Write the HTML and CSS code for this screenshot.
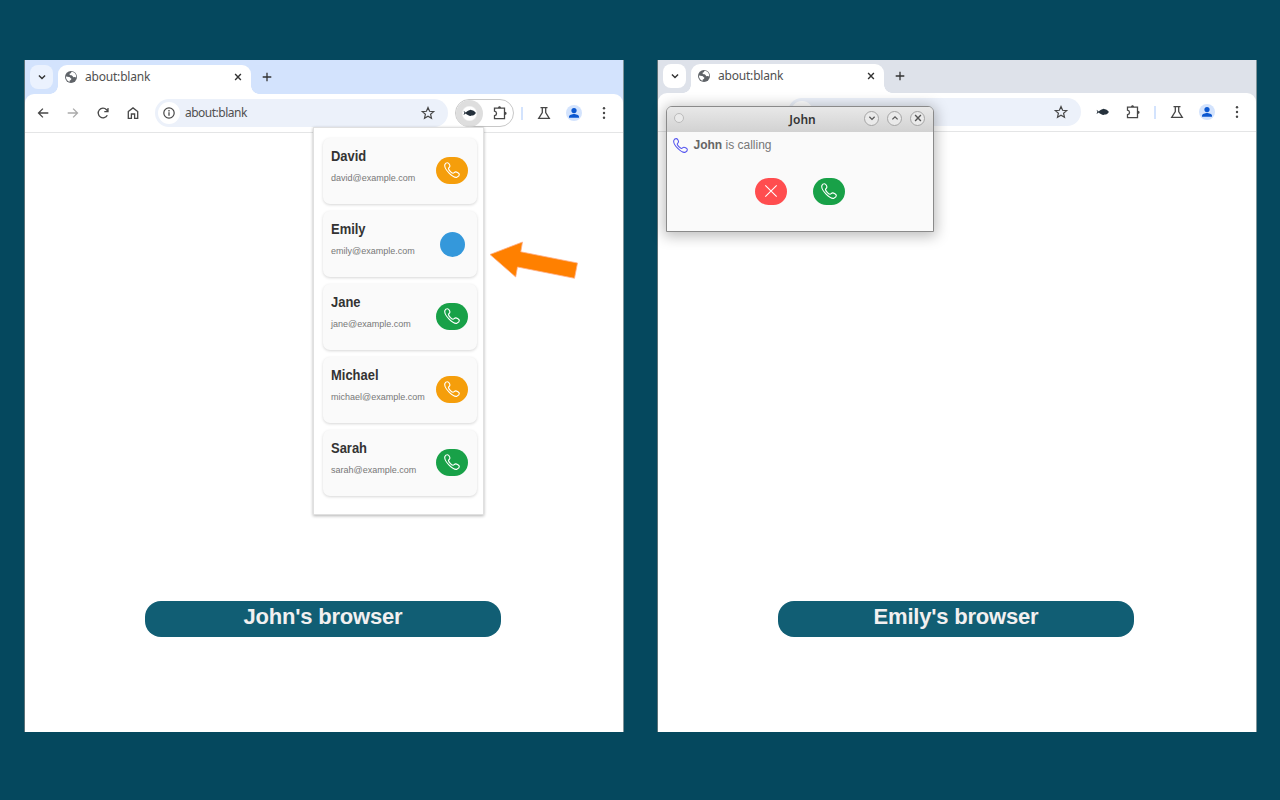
FILE: index.html
```
<!DOCTYPE html>
<html lang="en">
<head>
<meta charset="utf-8">
<title>Calling between browsers</title>
<link rel="stylesheet" href="styles.css">
</head>
<body>
<svg class="defs" width="0" height="0">
  <symbol id="phone" viewBox="0 0 16 16"><path d="M.9 2.500C1.300 1.500 2.500.7 3.500.7c1.200 0 2.400 2.200 2.400 3.400 0 1.300-1.500 1.500-1.400 2.500.2 1.400 2.900 4.300 4.400 4.600 1.100.2 1.400-1.300 2.700-1.300 1.200 0 3.700 1.300 3.700 2.500 0 1-1.200 2.200-2.200 2.700C9.500 16.600-.5 7 .9 2.500z" fill="none" stroke="currentColor" stroke-width="1.15" stroke-linejoin="round"/></symbol>
  <symbol id="down" viewBox="0 0 16 16"><path d="M4.500 6.300 8 9.800l3.500-3.500" class="line bold"/></symbol>
  <symbol id="up" viewBox="0 0 16 16"><path d="M4.500 9.800 8 6.300l3.500 3.500" class="line bold"/></symbol>
  <symbol id="cross" viewBox="0 0 16 16"><path d="m4.700 4.700 6.600 6.600m0-6.600-6.600 6.600" class="line bold"/></symbol>
  <symbol id="plus" viewBox="0 0 16 16"><path d="M8 3.700v8.600M3.700 8h8.600" class="line"/></symbol>
  <symbol id="globe" viewBox="0 0 14 14"><circle cx="7" cy="7" r="6" fill="#5f6368"/><path d="M1.900 6.500c1.300.1 2.300.7 3.300.6 1 .2 1.200 1.200 2.100 1.400.2 1-.5 1.700-1.600 2v1.300C3.600 11.400 1.900 9.400 1.900 6.500zM7.700 1.800c-.8.9-.4 1.500-1.600 1.700-.9.200-.7 1-.1 1.400 1 .4 1.800.2 2.500 1 .5.800 1 1.400 2 1.200.7-.1 1.200.1 1.600.6.600-2.800-1.200-5.500-4.400-5.900z" fill="#fff"/></symbol>
  <symbol id="back" viewBox="0 0 16 16"><path d="M13.300 8H3.500M7.900 3.600 3.500 8l4.400 4.400" class="line"/></symbol>
  <symbol id="reload" viewBox="0 0 16 16"><path d="M12.300 10.200A4.800 4.800 0 1 1 11.500 4.700L13 6.300M13 2.900v3.700H9.300" class="line"/></symbol>
  <symbol id="home" viewBox="0 0 16 16"><path d="M3.300 6.500 8 2.900l4.700 3.600v6.800H9.600V9H6.400v4.300H3.300z" class="line"/></symbol>
  <symbol id="info" viewBox="0 0 16 16"><circle cx="8" cy="8" r="5.200" class="line thin"/><path d="M8 7.300v3.400M8 5.100v1.300" class="line"/></symbol>
  <symbol id="star" viewBox="0 0 16 16"><path d="m8 2.500 1.600 3.800 4.100.3-3.100 2.700.9 4L8 11.200l-3.500 2.100.9-4-3.100-2.700 4.100-.3z" class="line thin"/></symbol>
  <symbol id="fish" viewBox="0 0 16 16"><path d="m1.500 5.700 2.300 1.700C5.200 5.900 6.700 5.100 8.700 4.700l1.200.6c1.800.3 3.100 1.200 4 2.600-1 1.700-2.400 2.500-4.200 2.700L8.500 11C6.700 10.500 5 9.700 3.800 8.400L1.500 9.900l.9-2.100z" fill="#25313c"/></symbol>
  <symbol id="puzzle" viewBox="0 0 18 18"><path d="M3.500 4.200H13.500V14.700H3.500V11.700C6.200 11.200 6.200 7.700 3.500 7.200Z" class="line"/><path d="M7 4C7 1.700 10 1.700 10 4ZM13.800 7.800C16.200 7.800 16.200 11 13.800 11Z" fill="#474747"/></symbol>
  <symbol id="flask" viewBox="0 0 16 16"><path d="M4.500 2.600h7M6.300 3v4.600L2.700 13.300h10.600L9.700 7.600V3" class="line"/></symbol>
  <symbol id="person" viewBox="0 0 16 16"><circle cx="8" cy="8" r="8" fill="#d3e3fd"/><circle cx="8" cy="5.600" r="2.600" fill="#0b57d0"/><path d="M3 12.700v-1c0-1.700 3.300-2.600 5-2.600s5 .9 5 2.600v1z" fill="#0b57d0"/></symbol>
  <symbol id="dots" viewBox="0 0 16 16"><g fill="#474747"><circle cx="8" cy="3.300" r="1.200"/><circle cx="8" cy="8" r="1.200"/><circle cx="8" cy="12.700" r="1.200"/></g></symbol>
  <symbol id="decline" viewBox="0 0 16 16"><path d="m2.300 2.300 11.400 11.400m0-11.400L2.300 13.700" fill="none" stroke="#fff" stroke-width="1.1"/></symbol>
</svg>

<main class="stage">
  <section class="browser active">
    <header class="tabs">
      <div class="tab-search"><svg class="i14"><use href="#down"/></svg></div>
      <div class="tab"><svg class="i14"><use href="#globe"/></svg><span class="tab-title">about:blank</span><svg class="i14"><use href="#cross"/></svg></div>
      <svg class="i16 new-tab"><use href="#plus"/></svg>
    </header>
    <nav class="toolbar">
      <span class="cell"><svg class="i16"><use href="#back"/></svg></span>
      <span class="cell dim"><svg class="i16 flip"><use href="#back"/></svg></span>
      <span class="cell"><svg class="i16"><use href="#reload"/></svg></span>
      <span class="cell"><svg class="i16"><use href="#home"/></svg></span>
      <div class="omnibox"><span class="site"><svg class="i16"><use href="#info"/></svg></span><span class="url">about:blank</span><svg class="i16"><use href="#star"/></svg></div>
      <div class="extensions"><span class="ext"><svg class="i16"><use href="#fish"/></svg></span><svg class="i18"><use href="#puzzle"/></svg></div>
      <span class="divider"></span>
      <span class="cell"><svg class="i16"><use href="#flask"/></svg></span>
      <span class="cell"><svg class="i16"><use href="#person"/></svg></span>
      <span class="cell"><svg class="i16"><use href="#dots"/></svg></span>
    </nav>
    <div class="page"><h2 class="label">John's browser</h2></div>

    <aside class="popup">
      <article class="contact"><div><h3>David</h3><p>david@example.com</p></div><button class="call busy"><svg class="i16"><use href="#phone"/></svg></button></article>
      <article class="contact"><div><h3>Emily</h3><p>emily@example.com</p></div><span class="calling"></span></article>
      <article class="contact"><div><h3>Jane</h3><p>jane@example.com</p></div><button class="call"><svg class="i16"><use href="#phone"/></svg></button></article>
      <article class="contact"><div><h3>Michael</h3><p>michael@example.com</p></div><button class="call busy"><svg class="i16"><use href="#phone"/></svg></button></article>
      <article class="contact"><div><h3>Sarah</h3><p>sarah@example.com</p></div><button class="call"><svg class="i16"><use href="#phone"/></svg></button></article>
    </aside>
    <svg class="arrow" viewBox="0 0 90 40"><path d="M1 14.500 33.500 2l-1.700 9.800L88.500 23 85.500 38.300 28.500 27l-1.800 10z" fill="#ff8000" stroke="#ffb08c" stroke-width=".8"/></svg>
  </section>

  <section class="browser inactive">
    <header class="tabs">
      <div class="tab-search"><svg class="i14"><use href="#down"/></svg></div>
      <div class="tab"><svg class="i14"><use href="#globe"/></svg><span class="tab-title">about:blank</span><svg class="i14"><use href="#cross"/></svg></div>
      <svg class="i16 new-tab"><use href="#plus"/></svg>
    </header>
    <nav class="toolbar">
      <span class="cell"></span><span class="cell"></span><span class="cell"></span><span class="cell"></span>
      <div class="omnibox"><span class="site"></span><span class="url"></span><svg class="i16"><use href="#star"/></svg></div>
      <div class="extensions"><span class="ext"><svg class="i16"><use href="#fish"/></svg></span><svg class="i18"><use href="#puzzle"/></svg></div>
      <span class="divider"></span>
      <span class="cell"><svg class="i16"><use href="#flask"/></svg></span>
      <span class="cell"><svg class="i16"><use href="#person"/></svg></span>
      <span class="cell"><svg class="i16"><use href="#dots"/></svg></span>
    </nav>
    <div class="page"><h2 class="label">Emily's browser</h2></div>

    <aside class="dialog">
      <header class="titlebar">
        <span class="knob small"></span><strong class="dialog-title">John</strong>
        <span class="knob"><svg class="i12"><use href="#down"/></svg></span><span class="knob"><svg class="i12"><use href="#up"/></svg></span><span class="knob"><svg class="i14"><use href="#cross"/></svg></span>
      </header>
      <div class="message"><svg class="i15"><use href="#phone"/></svg><span><b>John</b> is calling</span></div>
      <div class="actions"><button class="call reject"><svg class="i16"><use href="#decline"/></svg></button><button class="call"><svg class="i16"><use href="#phone"/></svg></button></div>
    </aside>
  </section>
</main>
</body>
</html>
```
FILE: styles.css
```
* { box-sizing: border-box; }
body { margin: 0; background: #05485e; font-family: "Liberation Sans", Arial, sans-serif; }
.defs { position: absolute; }
svg { display: block; flex: none; }
.line { fill: none; stroke: currentColor; stroke-width: 1.3; }
.line.thin { stroke-width: 1.2; }
.line.bold { stroke-width: 1.6; }
.i12 { width: 12px; height: 12px; }
.i14 { width: 14px; height: 14px; }
.i15 { width: 15px; height: 15px; }
.i16 { width: 16px; height: 16px; }
.i18 { width: 18px; height: 18px; }

.stage { display: flex; gap: 33px; height: 800px; padding: 60px 23px 68px 24px; }
.browser { position: relative; display: flex; flex-direction: column; flex: none; width: 600px; height: 672px; background: #fff; border-left: 1px solid #5c7177; border-right: 1px solid #7f9499; color: #474747; }
.tabs { display: flex; height: 43px; flex: none; padding: 5px 4px 0 5px; background: #d3e3fd; }
.inactive .tabs { background: #dee2ea; padding-top: 4px; height: 42px; }
.tab-search { display: flex; align-items: center; justify-content: center; width: 23px; height: 24px; border-radius: 8px; background: #ebf2fe; color: #333; }
.inactive .tab-search { background: #fff; }
.tab { position: relative; display: flex; align-items: center; width: 193px; height: 29px; margin-left: 5px; padding: 0 6px 5px 6px; border-radius: 9px 9px 0 0; background: #fff; color: #333; }
.tab::before, .tab::after { content: ""; position: absolute; bottom: 0; width: 8px; height: 8px; }
.tab::before { left: -8px; background: radial-gradient(circle at 0 0, transparent 7.5px, #fff 8px); }
.tab::after { right: -8px; background: radial-gradient(circle at 100% 0, transparent 7.5px, #fff 8px); }
.tab-title { flex: 1; padding-left: 7px; font: 12px/16px "Noto Sans", sans-serif; letter-spacing: -.2px; color: #505050; }
.new-tab { margin: 4px 0 0 8px; color: #333; }
.toolbar { position: relative; display: flex; flex: none; align-items: center; height: 39px; margin-top: -9px; padding-left: 3px; border-bottom: 1px solid #e4e5e6; border-radius: 9px 9px 0 0; background: #fff; }
.cell { display: flex; align-items: center; justify-content: center; width: 30px; height: 28px; }
.dim { color: #aaa; }
.flip { transform: scaleX(-1); }
.omnibox { display: flex; align-items: center; width: 293px; height: 28px; margin: 0 7px; padding: 0 12px 0 3px; border-radius: 14px; background: #ecf1fa; }
.site { display: flex; align-items: center; justify-content: center; width: 22px; height: 22px; border-radius: 50%; background: #fff; }
.url { flex: 1; padding-left: 5px; font: 12px/16px "Noto Sans", sans-serif; letter-spacing: -.5px; color: #505050; }
.extensions { display: flex; align-items: center; width: 59px; height: 28px; gap: 8px; border: 1px solid #c8c8c8; border-radius: 14px; }
.ext { display: flex; align-items: center; justify-content: center; width: 27px; height: 27px; border-radius: 50%; background: radial-gradient(circle, #fff 6.5px, #dedede 8px); }
.inactive .extensions { border-color: transparent; }
.inactive .ext { background: none; }
.divider { width: 2px; height: 13px; margin: 0 6px 0 7px; background: #d3e3fd; }
.page { display: flex; flex: 1; align-items: flex-end; padding: 0 0 95px 120px; }
.label { width: 356px; height: 36px; margin: 0; border-radius: 16px; background: #115e74; color: #f2f0f0; font-size: 22px; letter-spacing: -.2px; line-height: 31px; text-align: center; }

.popup { position: absolute; left: 287.500px; top: 67px; display: flex; flex-direction: column; gap: 7px; width: 171px; height: 387.500px; padding: 10px 6px 0 9px; border: 1px solid #e0e0e0; background: #fff; box-shadow: 0 1px 3px rgba(0,0,0,.3); }
.contact { display: flex; justify-content: space-between; height: 66.100px; padding: 0 8.500px; border-radius: 7px; background: #fafafa; box-shadow: 0 1px 3px rgba(0,0,0,.16); }
.contact > div { width: 96px; }
.contact h3 { margin: 9px 0 0; color: #333; font-size: 14px; line-height: 18px; transform: scaleX(.925); transform-origin: left; }
.contact p { margin: 8px 0 0; color: #777; font-size: 9px; line-height: 11px; }
.call { display: flex; flex: none; align-items: center; justify-content: center; width: 32px; height: 27px; margin-top: 19px; padding: 0 0 1px; border: 0; border-radius: 13.500px; background: #18a148; color: #fff; }
.busy { background: #f59e0b; }
.calling { width: 25px; height: 25px; margin: 20.500px 3px 0 0; border-radius: 50%; background: #3498db; }
.arrow { position: absolute; left: 464px; top: 180px; width: 90px; height: 40px; }

.dialog { position: absolute; left: 8px; top: 46px; width: 268px; height: 126px; border: 1px solid #8a8a8a; border-radius: 6px 6px 0 0; background: #fafafa; box-shadow: 0 2px 14px 2px rgba(0,0,0,.27); }
.titlebar { display: flex; align-items: center; height: 25px; padding: 0 8px 3px 7px; border-radius: 5px 5px 0 0; background: linear-gradient(#e8e8e8, #d2d2d2); color: #333; }
.dialog-title { flex: 1; padding: 3px 0 0 57px; font: 600 12px/16px "Noto Sans", sans-serif; text-align: center; }
.knob { display: flex; align-items: center; justify-content: center; width: 15px; height: 15px; border: 1px solid #a5a5a5; border-radius: 50%; background: #eaeaea; color: #555; }
.knob + .knob { margin-left: 8px; }
.knob.small { width: 10px; height: 10px; border-color: #bbb; }
.message { display: flex; align-items: center; height: 26px; padding-left: 5.500px; gap: 6px; color: #777; font-size: 12px; }
.message b { color: #666; }
.message svg { color: #5555ef; }
.actions { display: flex; gap: 26px; padding: 1px 0 0 88px; }
.reject { background: #ff4d4f; }
```
